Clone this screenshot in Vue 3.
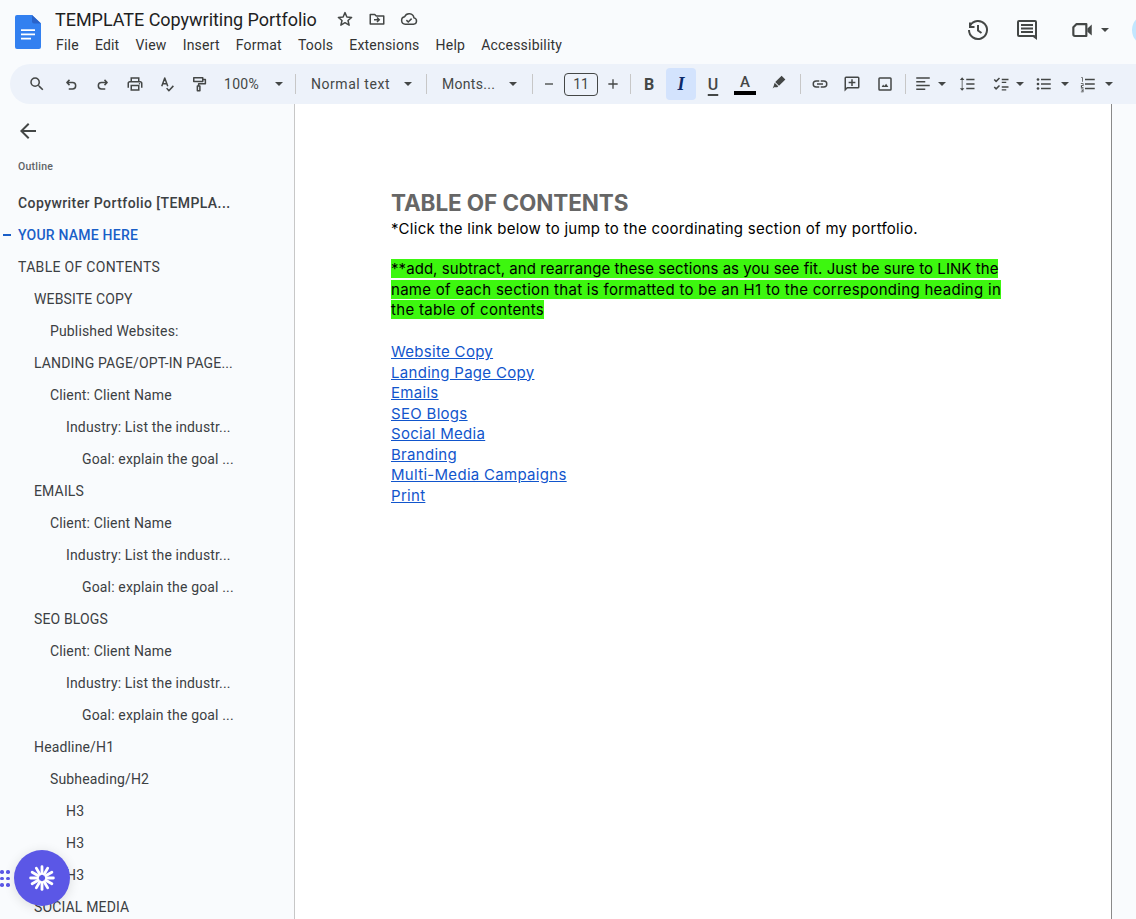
<script setup>
const menus = ['File', 'Edit', 'View', 'Insert', 'Format', 'Tools', 'Extensions', 'Help', 'Accessibility']
const outline = [
  ['Copywriter Portfolio [TEMPLA...', 0, 'strong'],
  ['YOUR NAME HERE', 0, 'active'],
  ['TABLE OF CONTENTS', 0, 'wide'],
  ['WEBSITE COPY', 1],
  ['Published Websites:', 2],
  ['LANDING PAGE/OPT-IN PAGE...', 1],
  ['Client: Client Name', 2],
  ['Industry: List the industr...', 3],
  ['Goal: explain the goal ...', 4],
  ['EMAILS', 1],
  ['Client: Client Name', 2],
  ['Industry: List the industr...', 3],
  ['Goal: explain the goal ...', 4],
  ['SEO BLOGS', 1],
  ['Client: Client Name', 2],
  ['Industry: List the industr...', 3],
  ['Goal: explain the goal ...', 4],
  ['Headline/H1', 1],
  ['Subheading/H2', 2],
  ['H3', 3],
  ['H3', 3],
  ['H3', 3],
  ['SOCIAL MEDIA', 1]
]
const links = ['Website Copy', 'Landing Page Copy', 'Emails', 'SEO Blogs', 'Social Media', 'Branding', 'Multi-Media Campaigns', 'Print']
const highlighted = [
  ['**add, subtract, and rearrange these sections as you see fit. Just be sure to LINK the', 'h1'],
  ['name of each section that is formatted to be an H1 to the corresponding heading in', 'h2'],
  ['the table of contents', 'h3']
]
const spokes = [0, 30, 60, 90, 120, 150, 180, 210, 240, 270, 300, 330]
</script>

<template>
  <div class="app">
    <header class="top">
      <svg class="logo" viewBox="0 0 26 36" width="26" height="34" preserveAspectRatio="none">
        <path d="M2 0h15l9 9v25a2 2 0 0 1-2 2H2a2 2 0 0 1-2-2V2a2 2 0 0 1 2-2z" fill="#3380f0" />
        <path d="M17 0l9 9h-7a2 2 0 0 1-2-2z" fill="#2a63c9" />
        <path d="M6 15h14v2H6zM6 19.500h14v2H6zM6 24h10v2H6z" fill="#fff" />
      </svg>
      <div class="titles">
        <div class="title-row">
          <span class="title">TEMPLATE Copywriting Portfolio</span>
          <svg class="ti first" viewBox="0 0 24 24"><path d="M12 3.500l2.500 5.800 6.300.6-4.800 4.100 1.500 6.200L12 16.900l-5.500 3.300L8 14 3.200 9.900l6.300-.6z" fill="none" stroke="#444746" stroke-width="2" stroke-linejoin="round" /></svg>
          <svg class="ti" viewBox="0 0 24 24"><path d="M3 18.500V6h6l2 2h10v10.500z" fill="none" stroke="#444746" stroke-width="2" stroke-linejoin="round" /><path d="M8 13h6M12 10l3 3-3 3" fill="none" stroke="#444746" stroke-width="2" /></svg>
          <svg class="ti" viewBox="0 0 24 24"><path d="M7 19a5 5 0 0 1-.8-9.900A6.500 6.500 0 0 1 18.600 10.500 4.300 4.300 0 0 1 18 19z" fill="none" stroke="#444746" stroke-width="2" stroke-linejoin="round" /><path d="M8.500 13.500l2.500 2.500 4.500-4.500" fill="none" stroke="#444746" stroke-width="2" /></svg>
        </div>
        <nav class="menus"><span v-for="m in menus" :key="m">{{ m }}</span></nav>
      </div>
      <div class="top-right">
        <svg class="tr" viewBox="0 0 24 24"><path d="M4 4.500V9h4.500M4.200 7.500A9 9 0 1 1 3 12" fill="none" stroke="#444746" stroke-width="2" /><path d="M12 7v5.500l3.500 2.500" fill="none" stroke="#444746" stroke-width="2" /></svg>
        <svg class="tr comment" viewBox="0 0 24 24"><path d="M20 17.200V4H4v13h14.400zM2 4a2 2 0 0 1 2-2h16a2 2 0 0 1 2 2v18l-4-3H4a2 2 0 0 1-2-2zm4 2h12v2H6zm0 3.500h12v2H6zM6 13h12v2H6z" fill="#444746" /></svg>
        <svg class="tr video" viewBox="0 0 24 24"><path d="M7 6.500h9v11H5.500A1.500 1.500 0 0 1 4 16V9.500z" fill="none" stroke="#444746" stroke-width="2" stroke-linejoin="round" /><path d="M17 10.500L21 7v10l-4-3.500z" fill="#444746" /></svg>
        <i class="caret vcaret"></i>
        <span class="avatar"></span>
      </div>
    </header>

    <div class="toolbar">
      <span class="btn lead"><svg viewBox="0 0 24 24"><path d="M15.500 14h-.79l-.28-.27A6.470 6.470 0 0 0 16 9.500 6.500 6.500 0 1 0 9.500 16c1.610 0 3.090-.59 4.230-1.570l.27.28v.79l5 4.990L20.490 19zm-6 0C7.010 14 5 11.990 5 9.500S7.010 5 9.500 5 14 7.010 14 9.500 11.990 14 9.500 14z" /></svg></span>
      <span class="btn"><svg viewBox="0 0 24 24"><path class="ln" d="M10 6.500L6.500 10l3.500 3.500M6.500 10H14a4 4 0 0 1 0 8.500H9" /></svg></span>
      <span class="btn"><svg viewBox="0 0 24 24"><path class="ln" d="M14 6.500l3.500 3.500L14 13.500M17.500 10H10a4 4 0 0 0 0 8.500h5" /></svg></span>
      <span class="btn"><svg viewBox="0 0 24 24"><path d="M19 8h-1V3H6v5H5c-1.660 0-3 1.340-3 3v6h4v4h12v-4h4v-6c0-1.660-1.340-3-3-3zM8 5h8v3H8zm8 14H8v-4h8zm2-2v-4H6v4H4v-6c0-.55.45-1 1-1h14c.55 0 1 .45 1 1v6z" /><circle cx="18" cy="11.500" r="1" /></svg></span>
      <span class="btn"><svg viewBox="0 0 24 24"><path class="ln" d="M5 15L9 4l4 11M6.300 11.500h5.400M11.500 17.500l3 3.500 6-6.500" /></svg></span>
      <span class="btn"><svg viewBox="0 0 24 24"><path class="ln" d="M5 3.500h12v5H5zM17 6h3.500v5.500H11.500v3M9.800 14.500h3.400v6.500H9.800z" /></svg></span>

      <span class="sel zoom"><span>100%</span><i class="caret"></i></span>
      <i class="sep"></i>
      <span class="sel style"><span>Normal text</span><i class="caret"></i></span>
      <i class="sep"></i>
      <span class="sel font"><span>Monts...</span><i class="caret"></i></span>
      <i class="sep"></i>

      <span class="btn pm"><svg viewBox="0 0 24 24"><path d="M6 11h12v2H6z" /></svg></span>
      <span class="size">11</span>
      <span class="btn pm"><svg viewBox="0 0 24 24"><path d="M11 5h2v6h6v2h-6v6h-2v-6H5v-2h6z" /></svg></span>
      <i class="sep s1"></i>

      <span class="btn glyph bold">B</span>
      <span class="btn glyph italic on">I</span>
      <span class="btn glyph under">U</span>
      <span class="btn glyph color"><b>A</b><i class="swatch"></i></span>
      <span class="btn pen"><svg viewBox="0 0 24 24"><path d="M15.500 3.500l5 5-8.500 8.500-5-5zM6.200 13l4.800 4.800-1.300 1.300H5.500l-2 1.400 1.400-3.300z" /></svg></span>
      <i class="sep s2"></i>

      <span class="btn"><svg viewBox="0 0 24 24"><path d="M3.900 12A3.100 3.100 0 0 1 7 8.900h4V7H7a5 5 0 0 0 0 10h4v-1.900H7A3.100 3.100 0 0 1 3.900 12zM8 13h8v-2H8zm9-6h-4v1.900h4a3.100 3.100 0 0 1 0 6.200h-4V17h4a5 5 0 0 0 0-10z" /></svg></span>
      <span class="btn"><svg viewBox="0 0 24 24"><path d="M20 2H4a2 2 0 0 0-2 2v18l4-4h14a2 2 0 0 0 2-2V4a2 2 0 0 0-2-2zm0 14H5.200L4 17.200V4h16zM11 5.500h2V9h3.500v2H13v3.500h-2V11H7.500V9H11z" /></svg></span>
      <span class="btn img"><svg viewBox="0 0 24 24"><path d="M19 3H5a2 2 0 0 0-2 2v14a2 2 0 0 0 2 2h14a2 2 0 0 0 2-2V5a2 2 0 0 0-2-2zm0 16H5V5h14zM13.500 11.500l-2.500 3.200-1.500-1.900L7.500 16h9z" /></svg></span>
      <i class="sep s3"></i>

      <span class="btn list align"><svg viewBox="0 0 24 24"><path d="M3 3h18v2H3zM3 8h12v2H3zM3 13h18v2H3zM3 18h12v2H3z" /></svg><i class="caret"></i></span>
      <span class="btn list spacing"><svg viewBox="0 0 24 24"><path d="M6 6.500h2.500L5.500 3l-3 3.500H5v11H2.500l3 3.500 3-3.500H6zM11 5h11v2H11zM11 11h11v2H11zM11 17h11v2H11z" /></svg></span>
      <span class="btn list check"><svg viewBox="0 0 24 24"><path class="ln" d="M3 6l2.500 2.500L10 4M3 16l2.500 2.500L10 14" /><path d="M13 5h9v2h-9zM13 9h6v1.500h-6zM13 15h9v2h-9zM13 19h6v1.500h-6z" /></svg><i class="caret"></i></span>
      <span class="btn list bullet"><svg viewBox="0 0 24 24"><circle cx="4" cy="6" r="1.800" /><circle cx="4" cy="12" r="1.800" /><circle cx="4" cy="18" r="1.800" /><path d="M8 5h13v2H8zM8 11h13v2H8zM8 17h13v2H8z" /></svg><i class="caret"></i></span>
      <span class="btn list number"><svg viewBox="0 0 24 24"><path d="M8 5h13v2H8zM8 11h13v2H8zM8 17h13v2H8zM3 3h2v6H4V4H3zM2.500 11h3.500v3.500H4v1.500h2v1H2.500v-3.500H5V12H2.500zM2.500 18H6v5H2.500v-1H5v-1H3.500v-1H5v-1H2.500z" /></svg><i class="caret"></i></span>
    </div>

    <div class="body">
      <aside class="side">
        <svg class="back" viewBox="0 0 24 24"><path d="M20 11H7.830l5.590-5.590L12 4l-8 8 8 8 1.410-1.410L7.830 13H20z" /></svg>
        <div class="outline-label">Outline</div>
        <ul class="outline">
          <li
            v-for="(row, i) in outline"
            :key="i"
            :class="[`lvl${row[1]}`, row[2]]"
          >{{ row[0] }}</li>
        </ul>
      </aside>
      <main class="page">
        <h1>TABLE OF CONTENTS</h1>
        <p class="line intro">*Click the link below to jump to the coordinating section of my portfolio.</p>
        <p class="line">&nbsp;</p>
        <p v-for="h in highlighted" :key="h[1]" class="line"><mark :class="h[1]">{{ h[0] }}</mark></p>
        <p class="line">&nbsp;</p>
        <p v-for="l in links" :key="l" class="line"><a>{{ l }}</a></p>
      </main>
      <div class="gutter"></div>
    </div>

    <div class="fab-grip"><i v-for="n in 6" :key="n"></i></div>
    <div class="fab">
      <svg viewBox="0 0 24 24" width="26" height="26">
        <path
          v-for="a in spokes"
          :key="a"
          d="M12 1.500V8"
          stroke="#fff"
          stroke-width="2.600"
          stroke-linecap="round"
          :transform="`rotate(${a} 12 12)`"
        />
      </svg>
    </div>
  </div>
</template>

<style>
html, body { margin: 0; overflow: hidden; }
</style>

<style scoped>
.app {
  position: relative;
  width: 1136px;
  height: 919px;
  overflow: hidden;
  background: #f9fbfd;
  font-family: Roboto, "Liberation Sans", sans-serif;
  color: #1f1f1f;
  display: flex;
  flex-direction: column;
}

/* header */
.top { height: 64px; display: flex; flex: none; box-sizing: border-box; padding: 15px 0 0 15px; }
.logo { flex: none; margin-right: 14px; }
.titles { display: flex; flex-direction: column; margin-top: -5px; }
.title-row { display: flex; align-items: center; height: 20px; margin-top: -1px; }
.title { font-size: 18px; letter-spacing: -.03px; color: #1f1f1f; white-space: nowrap; }
.ti { width: 18px; height: 18px; margin-left: 14px; flex: none; }
.ti.first { margin-left: 19px; }
.menus { display: flex; gap: 16.100px; margin: 8px 0 0 1px; font-size: 14px; letter-spacing: .2px; color: #333; white-space: nowrap; }
.top-right { margin-left: auto; display: flex; align-items: center; height: 30px; }
.tr { width: 24px; height: 24px; margin-right: 25px; flex: none; }
.tr.comment { margin-right: 30px; }
.tr.video { margin-right: 6px; width: 26px; height: 26px; }
.vcaret { margin-right: 23px; }
.avatar { width: 32px; height: 32px; border-radius: 50%; background: #c2e7ff; margin-right: -28px; flex: none; }

/* toolbar */
.toolbar {
  flex: none;
  height: 40px;
  margin-left: 10px;
  width: 1140px;
  box-sizing: border-box;
  padding-left: 11px;
  background: #edf2fa;
  border-radius: 20px 0 0 20px;
  display: flex;
  align-items: center;
  color: #444746;
}
.btn {
  flex: none;
  width: 32px;
  height: 32px;
  display: flex;
  align-items: center;
  justify-content: center;
  border-radius: 4px;
}
.btn svg { width: 18px; height: 18px; fill: #444746; flex: none; }
.btn.lead { margin-right: 2px; }
.ln { fill: none; stroke: #444746; stroke-width: 2; stroke-linejoin: round; }
.caret {
  display: inline-block;
  flex: none;
  width: 0;
  height: 0;
  border-left: 4.500px solid transparent;
  border-right: 4.500px solid transparent;
  border-top: 4.500px solid #444746;
}
.sep { flex: none; width: 1px; height: 20px; background: #c7c7c7; }
.sep.s1 { margin: 0 2px 0 1px; }
.sep.s2 { margin: 0 3px 0 5px; }
.sep.s3 { margin: 0 0 0 4px; }
.sel { flex: none; display: flex; align-items: center; justify-content: space-between; font-size: 14px; letter-spacing: .3px; color: #444746; box-sizing: border-box; }
.zoom { width: 59px; margin: 0 12px 0 9px; }
.style { width: 101px; margin: 0 14px 0 15px; letter-spacing: .55px; }
.font { width: 75px; margin: 0 15px; }
.pm svg { width: 16px; height: 16px; }
.size {
  flex: none;
  width: 34px;
  height: 23px;
  border: 1px solid #444746;
  border-radius: 4px;
  box-sizing: border-box;
  display: flex;
  align-items: center;
  justify-content: center;
  font-size: 14px;
  margin: 0 -1px;
}
.glyph { font-size: 16px; color: #444746; }
.bold { font-weight: 700; }
.italic { font-style: italic; font-weight: 700; font-family: "Liberation Serif", serif; }
.italic.on { background: #d3e3fd; color: #0b2a6b; font-size: 18px; width: 30px; margin: 0 1px; }
.under { text-decoration: underline; text-decoration-thickness: 1.500px; text-underline-offset: 4px; font-weight: 500; }
.color { flex-direction: column; }
.color b { font-weight: 500; font-size: 15px; line-height: 15px; margin-top: 2px; }
.swatch { width: 22px; height: 4px; background: #000; margin-top: 1px; }
.pen { margin-left: 2px; }
.pen svg { margin-bottom: 5px; }
.img { margin-left: 1px; }
.list { width: auto; gap: 6px; }
.align { margin-left: 8px; }
.spacing { margin-left: 12px; }
.check { margin-left: 16px; }
.bullet { margin-left: 11px; gap: 8px; }
.number { margin-left: 10px; gap: 8px; }

/* body */
.body { flex: 1; min-height: 0; display: flex; }
.side {
  flex: none;
  width: 295px;
  box-sizing: border-box;
  border-right: 1px solid #c7c7c7;
  padding: 15px 0 0 18px;
}
.back { display: block; width: 24px; height: 24px; fill: #444746; margin-left: -2px; }
.outline-label { font-size: 10.500px; font-weight: 500; line-height: 12px; letter-spacing: .25px; color: #5f6368; margin-top: 18px; }
.outline { list-style: none; margin: 14px 0 0; padding: 0; }
.outline li { height: 32px; line-height: 32px; font-size: 14px; letter-spacing: .15px; color: #3c4043; white-space: nowrap; }
.lvl1 { padding-left: 16px; }
.lvl2 { padding-left: 32px; }
.lvl3 { padding-left: 48px; }
.lvl4 { padding-left: 64px; }
.outline li.strong { font-weight: 500; letter-spacing: .42px; }
.outline li.wide { letter-spacing: .32px; }
.outline li.active { color: #1a5fc8; font-weight: 500; position: relative; letter-spacing: .22px; }
.outline li.active::before { content: ""; position: absolute; left: -15px; top: 15px; width: 8px; height: 2px; background: #1a5fc8; }

.page {
  flex: none;
  width: 817px;
  box-sizing: border-box;
  background: #fff;
  border-right: 1px solid #8a8a8a;
  padding: 85px 0 0 96px;
  font-family: Inter, "Liberation Sans", sans-serif;
  color: #000;
}
.page h1 { margin: 0 0 1px; font-size: 22.500px; line-height: 27px; font-weight: 700; color: #666; letter-spacing: -.1px; white-space: nowrap; }
.line { margin: 0; font-size: 15px; line-height: 24.500px; height: 20.530px; letter-spacing: .3px; white-space: nowrap; }
.intro { letter-spacing: .27px; }
mark { background: #3df70f; color: #000; display: inline-block; line-height: 20px; height: 19px; vertical-align: top; margin-top: 1px; }
.h1 { letter-spacing: .06px; }
.h2 { letter-spacing: .29px; }
.h3 { letter-spacing: .33px; }
.line a { color: #1155cc; text-decoration: underline; }
.gutter { flex: 1; }

/* floating button */
.fab {
  position: absolute;
  left: 14px;
  top: 850px;
  width: 56px;
  height: 56px;
  border-radius: 50%;
  background: #5b57e6;
  box-shadow: 0 2px 12px rgba(0, 0, 0, .12);
  display: flex;
  align-items: center;
  justify-content: center;
}
.fab-grip { position: absolute; left: 0; top: 870px; width: 9px; display: grid; grid-template-columns: 3px 3px; gap: 3px; }
.fab-grip i { width: 3.500px; height: 3.500px; border-radius: 50%; background: #5b57e6; }
</style>
